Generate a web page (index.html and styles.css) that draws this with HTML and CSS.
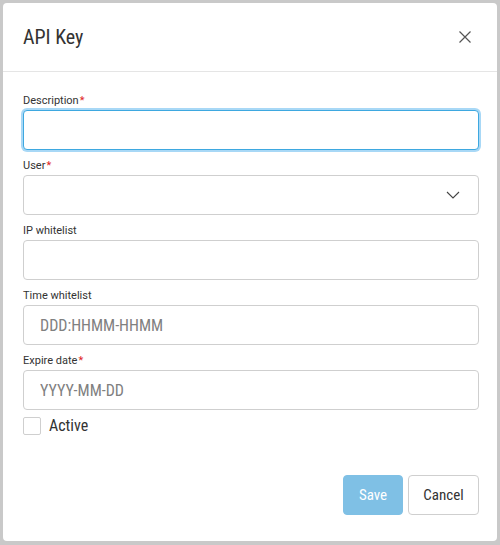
FILE: index.html
```html
<!DOCTYPE html>
<html lang="en">
<head>
<meta charset="utf-8">
<title>API Key</title>
<link rel="stylesheet" href="styles.css">
</head>
<body>
<div class="modal">
  <div class="modal-header">
    <h4 class="modal-title">API Key</h4>
    <button class="close" type="button" aria-label="Close">
      <svg width="14" height="14" viewBox="0 0 14 14"><path d="M1.5 1.5L12.5 12.5M12.5 1.5L1.5 12.5" stroke="#555" stroke-width="1.2" fill="none"/></svg>
    </button>
  </div>
  <div class="modal-body">
    <div class="field">
      <label class="label">Description<span class="req">*</span></label>
      <input class="input focused" type="text">
    </div>
    <div class="field">
      <label class="label">User<span class="req">*</span></label>
      <div class="input select">
        <svg class="chevron" width="14" height="8" viewBox="0 0 14 8"><path d="M1 1L7 7L13 1" stroke="#444" stroke-width="1.1" fill="none"/></svg>
      </div>
    </div>
    <div class="field">
      <label class="label">IP whitelist</label>
      <input class="input" type="text">
    </div>
    <div class="field">
      <label class="label">Time whitelist</label>
      <input class="input" type="text" placeholder="DDD:HHMM-HHMM">
    </div>
    <div class="field">
      <label class="label">Expire date<span class="req">*</span></label>
      <input class="input" type="text" placeholder="YYYY-MM-DD">
    </div>
    <label class="check">
      <span class="box"></span>
      <span class="check-text">Active</span>
    </label>
  </div>
  <div class="modal-footer">
    <button class="btn btn-primary" type="button">Save</button>
    <button class="btn btn-default" type="button">Cancel</button>
  </div>
</div>
</body>
</html>
```

FILE: styles.css
```css
html, body {
  margin: 0;
  padding: 0;
}
body {
  background: #c9c9c9;
  width: 500px;
  height: 545px;
  overflow: hidden;
  font-family: Roboto, "Liberation Sans", sans-serif;
  color: #333;
}
.modal {
  box-sizing: border-box;
  margin: 3px 0 0 3px;
  width: 494px;
  height: 538px;
  background: #fff;
  border-radius: 4px;
  display: flex;
  flex-direction: column;
}
.modal-header {
  box-sizing: border-box;
  height: 69px;
  border-bottom: 1px solid #e5e5e5;
  display: flex;
  align-items: center;
  justify-content: space-between;
  padding: 0 25px 0 20px;
}
.modal-title {
  margin: 0;
  font-size: 20px;
  font-weight: 400;
  font-stretch: 75%;
  line-height: 24px;
  color: #333;
}
.close {
  border: 0;
  background: none;
  padding: 0;
  width: 14px;
  height: 14px;
  display: flex;
}
.modal-body {
  padding: 21px 18px 0 20px;
  display: flex;
  flex-direction: column;
}
.field {
  display: flex;
  flex-direction: column;
  margin-bottom: 8px;
}
.label {
  font-size: 11px;
  line-height: 15px;
  font-weight: 400;
  color: #333;
  margin-bottom: 2px;
}
.req {
  color: #e02424;
  margin-left: 1px;
}
.input {
  box-sizing: border-box;
  height: 40px;
  width: 100%;
  border: 1px solid #cfcfcf;
  border-radius: 4px;
  padding: 0 16px;
  font-family: Roboto, "Liberation Sans", sans-serif;
  font-size: 16px;
  font-stretch: 75%;
  color: #333;
  background: #fff;
  outline: none;
  margin: 0;
}
.input::placeholder {
  color: #808080;
}
.input.focused {
  border-color: #3ea8e0;
  box-shadow: 0 0 0 2px rgba(110, 190, 240, 0.6);
}
.select {
  display: flex;
  align-items: center;
  justify-content: flex-end;
  padding-right: 18px;
}
.check {
  display: flex;
  align-items: center;
  margin-top: -1px;
}
.box {
  box-sizing: border-box;
  width: 18px;
  height: 18px;
  border: 1px solid #cfcfcf;
  border-radius: 2px;
  background: #fff;
}
.check-text {
  margin-left: 8px;
  font-size: 16px;
  font-stretch: 75%;
  color: #333;
  line-height: 18px;
}
.modal-footer {
  display: flex;
  justify-content: flex-end;
  gap: 5px;
  padding: 40px 18px 0 20px;
}
.btn {
  box-sizing: border-box;
  height: 40px;
  border-radius: 4px;
  font-family: Roboto, "Liberation Sans", sans-serif;
  font-size: 15px;
  font-stretch: 75%;
  padding: 0;
  margin: 0;
}
.btn-primary {
  width: 60px;
  background: #7fc0e5;
  border: 1px solid #7fc0e5;
  color: #fff;
}
.btn-default {
  width: 71px;
  background: #fff;
  border: 1px solid #cfcfcf;
  color: #333;
}
```
